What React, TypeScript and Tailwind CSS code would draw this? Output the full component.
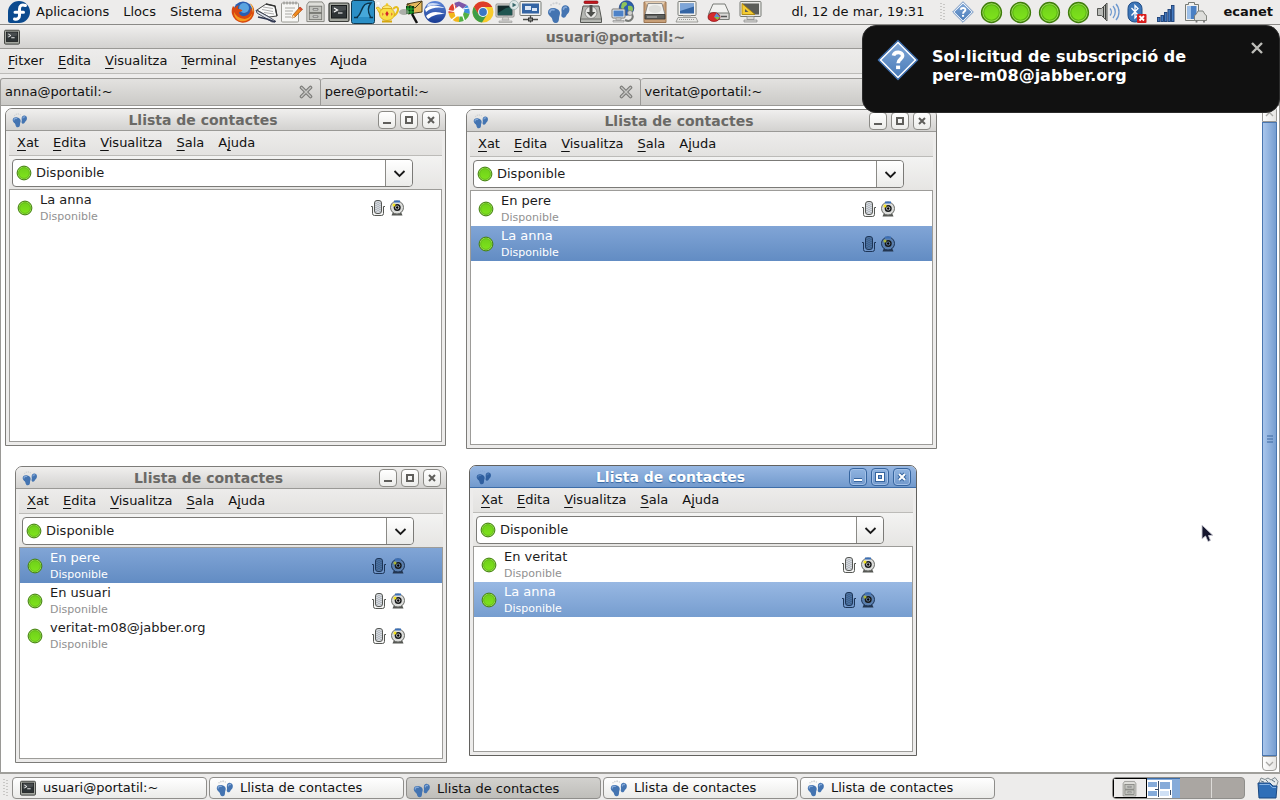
import type { ReactNode } from "react";
import clsx from "clsx";

type Contact = {
  name: string;
  selected?: boolean;
};

type ContactWindow = {
  id: string;
  place: string;
  active?: boolean;
  contacts: Contact[];
};

const windows: ContactWindow[] = [
  {
    id: "veritat",
    place: "left-[4px] top-[2px] w-[441px] h-[338px]",
    contacts: [{ name: "La anna" }],
  },
  {
    id: "anna",
    place: "left-[465px] top-[3px] w-[471px] h-[340px]",
    contacts: [{ name: "En pere" }, { name: "La anna", selected: true }],
  },
  {
    id: "usuari",
    place: "left-[14px] top-[360px] w-[432px] h-[297px]",
    contacts: [
      { name: "En pere", selected: true },
      { name: "En usuari" },
      { name: "veritat-m08@jabber.org" },
    ],
  },
  {
    id: "pere",
    place: "left-[468px] top-[359px] w-[448px] h-[291px]",
    active: true,
    contacts: [{ name: "En veritat" }, { name: "La anna", selected: true }],
  },
];

const terminalTabs = ["anna@portatil:~", "pere@portatil:~", "veritat@portatil:~", "usuari@portatil:~"];

// "_" goes before the letter that is underlined
const terminalMenu = ["_Fitxer", "_Edita", "_Visualitza", "_Terminal", "_Pestanyes", "A_juda"];
const contactMenu = ["_Xat", "_Edita", "_Visualitza", "_Sala", "A_juda"];

/* ---------- icons ---------- */

function Icon({ size = 24, children }: { size?: number; children: ReactNode }) {
  return (
    <svg width={size} height={size} viewBox="0 0 24 24" className="shrink-0" aria-hidden="true">
      {children}
    </svg>
  );
}

function Dot({ size = 16 }: { size?: number }) {
  return (
    <svg width={size} height={size} viewBox="0 0 16 16" className="shrink-0" aria-hidden="true">
      <circle cx="8" cy="8" r="6.9" fill="#a3e060" stroke="#3f7d0b" strokeWidth="1" />
      <circle cx="8" cy="8" r="5.4" fill="url(#dotFill)" stroke="#5cb512" strokeWidth="0.8" />
    </svg>
  );
}

function FedoraIcon() {
  return (
    <Icon>
      <path d="M12 1a11 11 0 1 1 0 22H3.500A2.500 2.500 0 0 1 1 20.500V12A11 11 0 0 1 12 1z" fill="#0b4a8e" />
      <path
        d="M18.500 5.500c-4-1.500-6 .3-6 3.500v6.500c0 2.800-2 4.200-5 3.500M8 12.300h8.500"
        fill="none"
        stroke="#fff"
        strokeWidth="3"
        strokeLinecap="round"
      />
    </Icon>
  );
}

function FirefoxIcon() {
  return (
    <Icon>
      <circle cx="12" cy="11" r="9.500" fill="#2a5db0" />
      <circle cx="13" cy="8" r="5" fill="#5aa4e0" />
      <path d="M2 6l2 2c1-2 2.500-2.500 4-2.500-1 1-1.500 2-1 3.200 2 .2 3 .6 4.500 1.500-1.200 1.500-2.500 1.600-3.500 2.200.5 2.800 3 4.200 6 3.600 4-.8 6-4 5.500-8.500 1.500 1.300 1.800 3 1.700 4.500.9-3.700-.4-7.200-3-9 4.800 2.200 6 7.500 4.300 12.500A11.300 11.300 0 0 1 1 14c-.8-3 0-6 1-8z" fill="#d9480f" />
      <path d="M3 12c0 6 4 9.500 9.500 9.300 4.500-.3 8-3.300 8.800-8-2 4.500-5.500 6-9 5.500C8 18.200 5 16 3 12z" fill="#f59b1c" />
      <path d="M19 3c3 2.500 4 6.500 3 10.500-.2-4-1-7-3-10.500z" fill="#fbc531" />
    </Icon>
  );
}

function PapersIcon() {
  return (
    <Icon>
      <path d="M2 10l9-6 9 2 2 10-8 1z" fill="#fafafa" stroke="#444" />
      <path d="M11 4l9 2 2 10" fill="none" stroke="#333" strokeWidth="1.300" />
      <path d="M8 7l10 1.500M7 9.500l11 2M9 12.500l10 1.500" stroke="#999" strokeWidth="0.800" />
      <path d="M1 10l13 7 7 4.500-4 .5L2 13z" fill="#dfe3ec" stroke="#3c4254" strokeWidth="0.900" />
      <path d="M3 17l9 2 8 3" fill="none" stroke="#2d3550" strokeWidth="1.500" />
    </Icon>
  );
}

function NotepadIcon() {
  return (
    <Icon>
      <rect x="2.500" y="3" width="17" height="19" rx="1" fill="#f7f7f5" stroke="#9a9a94" />
      <path d="M5 1.500v3M8 1.500v3M11 1.500v3M14 1.500v3M17 1.500v3" stroke="#8a8a86" />
      <path d="M6 8h10M6 11h8M6 14h7M6 17h6" stroke="#a9a9a4" />
      <path d="M21 7l2.500 2.200L16 17l-3 1 1-3z" fill="#f08a1d" stroke="#a9520c" strokeWidth="0.800" />
      <path d="M14 15l2 2-3 1z" fill="#f6e3c0" />
      <path d="M21 7l2.500 2.200-1.500 1.500L19.700 8.500z" fill="#d8463a" />
    </Icon>
  );
}

function CabinetIcon({ size = 24 }: { size?: number }) {
  return (
    <Icon size={size}>
      <path d="M5 2h14l2 3v17.500H3V5z" fill="#dededa" stroke="#83837e" />
      <rect x="5.500" y="6.500" width="13" height="6.500" fill="#c2c3be" stroke="#757671" />
      <rect x="5.500" y="14" width="13" height="6.500" fill="#c2c3be" stroke="#757671" />
      <path d="M9.500 9h5v1.500h-5zM9.500 16.500h5V18h-5z" fill="#fff" stroke="#555" strokeWidth="0.700" />
    </Icon>
  );
}

function TerminalIcon({ size = 24 }: { size?: number }) {
  return (
    <Icon size={size}>
      <rect x="2" y="3" width="20" height="18.500" rx="1.500" fill="#a3a69f" stroke="#3a3c39" strokeWidth="1.200" />
      <rect x="4.500" y="5.500" width="15" height="12.500" fill="#2e3436" stroke="#171a1b" />
      <path d="M7 8l3.500 2L7 12M11 13h4.500" fill="none" stroke="#fff" strokeWidth="1.200" />
      <path d="M5 6h14v4L5 13z" fill="#fff" opacity="0.120" />
    </Icon>
  );
}

function SharkFinIcon() {
  return (
    <Icon>
      <rect x="0.500" y="0.500" width="23" height="23" rx="2" fill="#2b8fc6" stroke="#0e3850" />
      <path d="M6 17c4-2 4-9 8-12.500C15.500 3.500 17.500 3 20 3c-3.500 4-3 9.500-.5 14" fill="#46a8da" stroke="#0c3349" strokeWidth="1.400" />
      <path d="M3 17.500h4M18.500 17.500H22" stroke="#0c3349" strokeWidth="1.400" />
    </Icon>
  );
}

function TeapotIcon() {
  return (
    <Icon>
      <path d="M1 3c2-3 5-1 4 1s2 1 2 3" fill="#fff" stroke="#ddd" strokeWidth="0.800" />
      <path d="M18 9c4-4 6-1 4.500 2.500S19 16 17.500 16" fill="none" stroke="#e6bd1c" strokeWidth="2" />
      <path d="M6 14C3 13 3 9 1 8l2-1c2 1 3 3 4 3" fill="#f7dc4a" stroke="#d5a60f" strokeWidth="0.800" />
      <ellipse cx="12" cy="14" rx="7.500" ry="6.500" fill="#f9de45" stroke="#d5a60f" strokeWidth="0.800" />
      <path d="M7 8.500c1-4 9-4 10 0z" fill="#fbe873" stroke="#d5a60f" strokeWidth="0.800" />
      <circle cx="12" cy="4.500" r="1.300" fill="#f2ca28" />
      <path d="M7 21.500h10" stroke="#d5a60f" strokeWidth="2" />
      <path d="M12 11l1.700 2.700L12 16.500l-1.700-2.800zM7.500 12.500l1 1.500-1 2zM16.500 12.500l1 1.500-1 2z" fill="#d3222a" />
    </Icon>
  );
}

function PacketSearchIcon() {
  return (
    <Icon>
      <path d="M8 4l15-3v11L9 14z" fill="#e5b95b" stroke="#4a3a17" />
      <path d="M8 4l8 4 7-7" fill="none" stroke="#4a3a17" />
      <rect x="7" y="6" width="8" height="8" fill="#0d3d12" />
      <path d="M9 6v8M12 6v8M7 9h8M7 12h8" stroke="#25b533" />
      <ellipse cx="5" cy="12" rx="5" ry="3" fill="#8f948b" opacity="0.700" />
      <path d="M13 14l5 9" stroke="#111" strokeWidth="2.500" />
    </Icon>
  );
}

function EarthIcon() {
  return (
    <Icon>
      <circle cx="12" cy="12" r="11" fill="url(#earthFill)" />
      <path d="M2 9c5-5 12-4 20-1-7-1-13-1-19 4zM3 16c5-5 11-5 19-2-7 0-12 1-17 5z" fill="#fff" />
      <path d="M5 4c4-2 9-1 13 1-5-.5-9 0-14 2z" fill="#cddcf6" />
    </Icon>
  );
}

function PicasaIcon() {
  return (
    <Icon>
      <path d="M12 1.500L20 5l-8 7L7 3z" fill="#7e57a8" />
      <path d="M20 5a11 11 0 0 1 2.500 9L13 12z" fill="#3f8ede" />
      <path d="M22.500 14A10.500 10.500 0 0 1 12 22l1-11z" fill="#52b043" />
      <path d="M12 22A10.500 10.500 0 0 1 1.500 13L12 11z" fill="#f2b61c" />
      <path d="M1.500 13A10.500 10.500 0 0 1 7 3l5 9z" fill="#e0402f" />
      <path d="M12 6l5.500 4-2 6.500h-7L6.500 10z" fill="#fff" />
      <path d="M8 9L6.500 2.500M16 9l6-1M15.500 15l2 6M9.500 16L4 20.500M7 11.500l-6-1" stroke="#fff" strokeWidth="1.200" />
    </Icon>
  );
}

function ChromeIcon() {
  return (
    <Icon>
      <circle cx="12" cy="12" r="10.500" fill="#f7cb2d" />
      <path d="M2.900 6.700A10.500 10.500 0 0 1 21.300 7H12l-4.300 7.500z" fill="#dd3b2a" />
      <path d="M2.900 6.700A10.500 10.500 0 0 0 11 22.400l5-8-8.300.1z" fill="#3f9d46" />
      <circle cx="12" cy="12" r="5" fill="#f5f5f5" />
      <circle cx="12" cy="12" r="3.900" fill="#3a77c4" />
    </Icon>
  );
}

function ScreencastIcon() {
  return (
    <Icon>
      <rect x="1" y="4" width="18" height="13" rx="1" fill="#e8e8e6" stroke="#8c8c88" />
      <rect x="2.500" y="5.500" width="15" height="10" fill="#12292b" />
      <path d="M3 13l8-5 6-1v8H3z" fill="#1f5550" />
      <path d="M8 17h5l1 3H7zM4 21h13v1.500H4z" fill="#d0d0cc" stroke="#999" strokeWidth="0.600" />
      <circle cx="19" cy="5" r="4.500" fill="#dfe8e8" stroke="#9bb0b0" strokeWidth="0.800" />
      <path d="M17.500 2.700v4.600L21.500 5z" fill="#3b6a6d" />
    </Icon>
  );
}

function RemoteDesktopIcon() {
  return (
    <Icon>
      <rect x="1" y="1.500" width="21" height="14" rx="1" fill="#f2f2f0" stroke="#777a75" />
      <rect x="3" y="3.500" width="17" height="10" fill="#3465a4" />
      <path d="M6 6h6v4H6zM13 8h5v3h-5z" fill="#dce7f5" />
      <path d="M11.500 15.500v7M4 19.500h15" stroke="#4b4d4a" strokeWidth="1.300" />
      <rect x="9.500" y="18" width="4" height="3" fill="#8a8c88" stroke="#333" />
    </Icon>
  );
}

function FeetIcon({ size = 24, dark }: { size?: number; dark?: boolean }) {
  return (
    <Icon size={size}>
      <g fill={dark ? "#86a9d8" : "#cfd1d3"}>
        <circle cx="4" cy="5" r="1" />
        <circle cx="6.500" cy="3.500" r="1.100" />
        <circle cx="9.500" cy="3" r="1.200" />
        <circle cx="12.500" cy="4" r="1" />
      </g>
      <g fill={dark ? "#2f5f9f" : "#4474b1"}>
        <path d="M1 12.500C1 9 3.500 7.500 7 8s6 2.500 6 5c0 2.200-1 3-1 5.500s-1 4.500-3.200 4.500c-2.500 0-3.300-2-3.600-4S1 15.500 1 12.500z" />
        <path d="M14.500 9c.3-3 2.200-4.200 4.500-3.800 2.800.5 4 2.800 3.300 5.800-.7 2.700-2 2.500-3 4.500s-2 2.500-3.400 2c-1.500-.5-1.900-2-1.400-3.500s-.2-2.500 0-5z" />
      </g>
      <path
        d="M3 12c.2-2 2-2.700 4-2.200M16.500 9c.3-1.500 1.500-2 2.700-1.700"
        fill="none"
        stroke={dark ? "#4d7ab5" : "#83a8d8"}
        strokeWidth="1.800"
        strokeLinecap="round"
      />
    </Icon>
  );
}

function InstallIcon() {
  return (
    <Icon>
      <path d="M4 6h16l2.500 13v3.500h-21V19z" fill="#b5b7b2" stroke="#555753" />
      <path d="M2 19h20" stroke="#6d6f6b" />
      <circle cx="12" cy="12.500" r="6" fill="#e7e8e5" stroke="#777" strokeWidth="0.800" />
      <path d="M10.500 5h3v7h3L12 17l-4.500-5h3z" fill="#4d4f4c" />
      <rect x="5" y="1" width="14" height="2.500" rx="1" fill="#c5161d" stroke="#7f0a10" strokeWidth="0.700" />
    </Icon>
  );
}

function NetworkGlobeIcon() {
  return (
    <Icon>
      <circle cx="15.500" cy="8" r="7.300" fill="#2c5fae" stroke="#173b77" strokeWidth="0.700" />
      <path d="M11 3c3-2 5-1 5 1s-3 2-3 4-3 1-3-1zM17 6c3-1 5 0 5 3s-3 5-4 4 0-3-1-4z" fill="#8fc45a" />
      <rect x="1" y="9" width="13" height="9" rx="1" fill="#f2f2f0" stroke="#777" />
      <rect x="2.500" y="10.500" width="10" height="6" fill="#4d82c8" />
      <path d="M5 18h5v2H5zM2 20.500h11V22H2z" fill="#dadad7" stroke="#888" strokeWidth="0.600" />
      <path d="M14 20c6 3 10-3 6-7" fill="none" stroke="#777a76" strokeWidth="2" />
      <circle cx="19" cy="13" r="2.500" fill="#d0d0cc" stroke="#777" strokeWidth="0.700" />
    </Icon>
  );
}

function DiskBoxIcon() {
  return (
    <Icon>
      <path d="M1 2h22v20.500H1z" fill="#c89f77" stroke="#9b7450" />
      <path d="M2 2h20l-2 3H4z" fill="#e7cfb2" />
      <path d="M5 3.500h14l3 11H2z" fill="#f0f0ee" stroke="#777" strokeWidth="0.800" />
      <ellipse cx="12" cy="9" rx="6.500" ry="4" fill="#dededb" />
      <path d="M2 14.500h20v4.500H2z" fill="#5f615e" stroke="#333" strokeWidth="0.800" />
      <path d="M4 17h10" stroke="#bbb" />
    </Icon>
  );
}

function ComputerIcon() {
  return (
    <Icon>
      <rect x="3" y="1.500" width="18" height="14" rx="1" fill="#f2f2f0" stroke="#777a75" />
      <rect x="5" y="3.500" width="14" height="10" fill="#3465a4" />
      <path d="M5 3.500h14v3L5 11z" fill="#7da5d8" />
      <path d="M8 15.500h8v2H8z" fill="#c8c8c4" />
      <path d="M3 17.500h18l2 4.500H1z" fill="#e9e9e6" stroke="#8a8c87" strokeWidth="0.800" />
      <path d="M4 19.500h16" stroke="#999" strokeDasharray="1 1" />
    </Icon>
  );
}

function DiskUsageIcon() {
  return (
    <Icon>
      <path d="M6 4h12l4 9v6.500H2V13z" fill="#f2f2f0" stroke="#777a75" />
      <path d="M2 13h20v6.500H2z" fill="#d9d9d6" stroke="#777a75" />
      <path d="M14 16.500h6" stroke="#555" strokeWidth="1.500" />
      <ellipse cx="7" cy="17" rx="6" ry="4.500" fill="#d52b2b" stroke="#8c0f12" strokeWidth="0.700" />
      <path d="M7 17l2.500-4 3.500 4z" fill="#5e8ed0" />
      <path d="M7 17h6l-2.500 3z" fill="#7fc04a" />
    </Icon>
  );
}

function RulerScreenIcon() {
  return (
    <Icon>
      <rect x="1" y="1.500" width="21" height="15" rx="1" fill="#e8e8e5" stroke="#777a75" />
      <rect x="3" y="3.500" width="17" height="11" fill="#5b5d59" />
      <path d="M3 3.500l13 11H3z" fill="#f3cb33" stroke="#a98207" strokeWidth="0.800" />
      <path d="M6 9l3.500 3H6z" fill="#5b5d59" />
      <path d="M8 16.500h7v3H8zM5 20h13v2H5z" fill="#d9d9d6" stroke="#888" strokeWidth="0.700" />
    </Icon>
  );
}

function QuestionIcon({ size }: { size: number }) {
  return (
    <Icon size={size}>
      <path d="M12 .8L23.200 12 12 23.200.8 12z" fill="#fff" stroke="#3a6bab" strokeWidth="0.800" strokeLinejoin="round" />
      <path d="M12 2.600L21.400 12 12 21.400 2.600 12z" fill="url(#questionFill)" />
      <path d="M9.400 9.500c.6-2.600 5.400-2.400 5.200.2-.1 1.900-2.500 1.800-2.500 4.100" fill="none" stroke="#fff" strokeWidth="2.100" />
      <rect x="10.900" y="15.200" width="2.300" height="2" fill="#fff" />
    </Icon>
  );
}

function VolumeIcon() {
  return (
    <Icon>
      <path d="M1.500 8.500h4L11 3v18l-5.500-5.500h-4z" fill="#b9bbb7" stroke="#555753" />
      <path d="M7.500 7v10M9.500 5v14" stroke="#3f413e" />
      <path d="M14 8.500c1.800 2 1.800 5 0 7M17 6c3 3.500 3 8.500 0 12M20 4c4 4.500 4 11.500 0 16" fill="none" stroke="#6c98cf" strokeWidth="1.300" />
    </Icon>
  );
}

function BluetoothIcon() {
  return (
    <Icon>
      <rect x="3" y="2" width="14" height="20" rx="6.500" fill="#3d76b8" stroke="#1f4c86" />
      <path d="M6.500 8l6.500 7-3 3V5.500l3 3-6.500 7" fill="none" stroke="#fff" strokeWidth="1.300" />
      <rect x="12" y="14" width="9.500" height="9" rx="1" fill="#d81e1e" />
      <path d="M14.500 16l4.500 4.500M19 16l-4.500 4.500" stroke="#fff" strokeWidth="1.800" />
    </Icon>
  );
}

function SignalIcon() {
  return (
    <Icon>
      <g fill="#4479be" stroke="#1c3f77" strokeWidth="0.900">
        <rect x="3.500" y="17.500" width="2.500" height="4" />
        <rect x="7" y="15.500" width="2.500" height="6" />
        <rect x="10.500" y="12.500" width="2.500" height="9" />
        <rect x="14" y="9.500" width="2.500" height="12" />
        <rect x="17.500" y="5.500" width="2.500" height="16" />
      </g>
    </Icon>
  );
}

function BatteryIcon() {
  return (
    <Icon>
      <path d="M5.500 2.500h6v2h4v16h-13v-16h3z" fill="#f0f0ee" stroke="#777a75" />
      <rect x="4.500" y="6" width="9" height="13" fill="#4a80c4" />
      <path d="M4.500 6H8v13H4.500z" fill="#9cc0ea" />
      <path d="M13 14.500l2-3.500h5l2 3.500 1.500 1v5H11.500V15.500z" fill="#dededb" stroke="#777a75" strokeWidth="0.900" />
      <path d="M13.500 20.500v2M21 20.500v2" stroke="#777" strokeWidth="1.800" />
    </Icon>
  );
}

function TrashIcon() {
  return (
    <Icon>
      <path d="M3 7l2-5 4 1.500L12 2l3 2 4-2.500 3 4L20 12z" fill="#e3e8ea" stroke="#7f8a90" />
      <path d="M5 5l3 1M10 4l2 2M16 4l3 2" stroke="#5d7486" />
      <path d="M2 7h12l3 3h4l-1 12H3z" fill="#2f6fb8" stroke="#1b4880" />
      <path d="M3.500 8.500h10l3 3H20" fill="none" stroke="#86b3e4" />
    </Icon>
  );
}

function MicIcon({ selected }: { selected?: boolean }) {
  const line = selected ? "#1d3557" : "#555753";
  return (
    <svg width="16" height="16" viewBox="0 0 16 16" className="shrink-0" aria-hidden="true">
      <path
        d="M1 6.500h1.500v7a2 2 0 0 0 2 2h7a2 2 0 0 0 2-2v-7H15"
        fill={selected ? "#6f95c8" : "#f3f3f3"}
        stroke={line}
      />
      <rect x="4.500" y="0.500" width="7" height="13" rx="2.500" fill={selected ? "#4c719f" : "#d3d7dc"} stroke={line} />
      <path
        d="M6 3v9M8 2v10M10 3v9"
        stroke={selected ? "#30527f" : "#9097a0"}
        strokeWidth="0.900"
        strokeDasharray="1 1"
      />
    </svg>
  );
}

function WebcamIcon({ selected }: { selected?: boolean }) {
  return (
    <svg width="16" height="16" viewBox="0 0 16 16" className="shrink-0" aria-hidden="true">
      <path d="M4 12h8l1.500 3.500h-11z" fill={selected ? "#24364f" : "#555753"} />
      <circle cx="8" cy="7.500" r="6.500" fill={selected ? "#5a7fae" : "#dcdddb"} stroke={selected ? "#1d3557" : "#6c6e6a"} />
      <path d="M5 1.500h6" stroke="#3b6fb5" strokeWidth="2" />
      <circle cx="8.200" cy="7.500" r="3.500" fill="#17191a" />
      <circle cx="8.200" cy="7.500" r="2" fill={selected ? "#6f90bb" : "#d8d8d8"} />
      <circle cx="8.200" cy="7.500" r="1.200" fill="#000" />
      <circle cx="5" cy="5" r="1.500" fill={selected ? "#a9b53a" : "#f2e21c"} />
    </svg>
  );
}

function CloseGlyph() {
  return (
    <svg width="14" height="14" viewBox="0 0 14 14" className="block" aria-hidden="true">
      <path d="M2.500 2.500l9 9M11.500 2.500l-9 9" stroke="#7c7c79" strokeWidth="3.600" strokeLinecap="round" />
      <path d="M2.500 2.500l9 9M11.500 2.500l-9 9" stroke="#c6c6c3" strokeWidth="1.400" strokeLinecap="round" />
    </svg>
  );
}

// gradients shared by all the icons
function Gradients() {
  return (
    <svg width="0" height="0" className="absolute" aria-hidden="true">
      <defs>
        <linearGradient id="dotFill" x1="0" y1="0" x2="0" y2="1">
          <stop offset="0" stopColor="#6fd01a" />
          <stop offset="1" stopColor="#7fe31c" />
        </linearGradient>
        <linearGradient id="questionFill" x1="0" y1="0" x2="0" y2="1">
          <stop offset="0" stopColor="#7fa6d6" />
          <stop offset="1" stopColor="#4a7cb9" />
        </linearGradient>
        <linearGradient id="earthFill" x1="0" y1="0" x2="0" y2="1">
          <stop offset="0" stopColor="#5d86d8" />
          <stop offset="1" stopColor="#173a92" />
        </linearGradient>
      </defs>
    </svg>
  );
}

/* ---------- shared pieces ---------- */

function Menu({ items }: { items: string[] }) {
  return (
    <nav className="flex h-full items-center gap-3.5">
      {items.map((item) => {
        const [before, after] = item.split("_");
        return (
          <button key={item} type="button" className="whitespace-nowrap">
            {before}
            <span className="underline underline-offset-[3px]">{after[0]}</span>
            {after.slice(1)}
          </button>
        );
      })}
    </nav>
  );
}

function WindowButton({ kind, active }: { kind: "min" | "max" | "close"; active?: boolean }) {
  const labels = { min: "Minimitza", max: "Maximitza", close: "Tanca" };
  const paths = { min: "M5 12h8", max: "M6 6h6v6H6z", close: "M6 6l6 6M12 6l-6 6" };
  return (
    <button
      type="button"
      aria-label={labels[kind]}
      className={clsx(
        "size-[18px] rounded-[4px] border",
        active
          ? "border-[#36659f] bg-linear-to-b from-[#8fb3e0] to-[#7299cc] shadow-[inset_0_0_0_1px_#a3c0e6]"
          : "border-[#8b8a86] bg-linear-to-b from-white to-[#ececea]",
      )}
    >
      <svg width="18" height="18" viewBox="0 0 18 18" className="-m-px" aria-hidden="true">
        {active && <path d={paths[kind]} fill="none" stroke="#36659f" strokeWidth="4" />}
        <path d={paths[kind]} fill="none" stroke={active ? "#fff" : "#5f5e5b"} strokeWidth="2" />
      </svg>
    </button>
  );
}

function ContactRow({ contact, active }: { contact: Contact; active?: boolean }) {
  return (
    <li
      className={clsx(
        "flex h-[35px] items-center pr-9 pl-[7px]",
        contact.selected && (active ? "bg-linear-to-b from-[#98b8e3] to-[#769dcf]" : "bg-linear-to-b from-[#81a5d6] to-[#628cc3]"),
      )}
    >
      <Dot />
      <div className="ml-[7px] flex-1">
        <p className={clsx("leading-[19px]", contact.selected ? "text-white" : "text-[#1c1c1c]")}>{contact.name}</p>
        <p className={clsx("text-[11px] leading-4", contact.selected ? "text-white" : "text-[#919191]")}>
          Disponible
        </p>
      </div>
      <div className="flex gap-[3px]">
        <MicIcon selected={contact.selected} />
        <WebcamIcon selected={contact.selected} />
      </div>
    </li>
  );
}

function ContactListWindow({ win }: { win: ContactWindow }) {
  const { active } = win;
  return (
    <section
      className={clsx(
        "absolute flex flex-col overflow-hidden rounded-t-[7px] border bg-[#edeceb]",
        active ? "border-[#62615e]" : "border-[#7d7c79]",
        win.place,
      )}
    >
      <header
        className={clsx(
          "flex h-[22px] shrink-0 items-center border-b pr-[5px] pl-1.5",
          active
            ? "border-[#3d6da8] bg-linear-to-b from-[#98b8e3] to-[#729acd]"
            : "border-[#9a9996] bg-linear-to-b from-[#f0efee] to-[#d3d2d0]",
        )}
      >
        <FeetIcon size={16} dark={active} />
        <h2
          className={clsx(
            "flex-1 text-center text-[14px] leading-5 font-bold",
            active ? "text-white [text-shadow:0_1px_1px_#36659f]" : "text-[#6a6966]",
          )}
        >
          Llista de contactes
        </h2>
        <div className="flex gap-1">
          <WindowButton kind="min" active={active} />
          <WindowButton kind="max" active={active} />
          <WindowButton kind="close" active={active} />
        </div>
      </header>
      <div className="flex flex-1 flex-col px-[3px] pb-[3px]">
        <div className="h-[25px] border-b border-[#bcbbb8] bg-linear-to-b from-[#edeceb] to-[#e3e2e0] pl-2">
          <Menu items={contactMenu} />
        </div>
        <div className="h-[33px] bg-linear-to-b from-[#f3f3f2] to-[#e6e5e3] pt-[3px] pr-[29px] pl-[3px]">
          <label className="flex h-[28px] items-center rounded-[4px] border border-[#7b7a77] bg-white pl-[3px]">
            <Dot />
            <select aria-label="Estat" className="h-full flex-1 appearance-none bg-transparent pl-1 text-[#1c1c1c] outline-none">
              <option>Disponible</option>
              <option>Ocupat</option>
              <option>Absent</option>
            </select>
            <span className="flex h-full w-[27px] items-center justify-center rounded-r-[4px] border-l border-[#8b8a86] bg-linear-to-b from-white to-[#ebebe9]">
              <svg width="13" height="9" viewBox="0 0 13 9" aria-hidden="true">
                <path d="M1.500 2l5 5 5-5" fill="none" stroke="#1a1a1a" strokeWidth="1.800" />
              </svg>
            </span>
          </label>
        </div>
        <ul className="flex-1 border border-[#9d9c99] bg-white">
          {win.contacts.map((contact) => (
            <ContactRow key={contact.name} contact={contact} active={active} />
          ))}
        </ul>
      </div>
    </section>
  );
}

/* ---------- panels ---------- */

const launchers = [
  { label: "Firefox", icon: <FirefoxIcon /> },
  { label: "Documents", icon: <PapersIcon /> },
  { label: "Editor de text", icon: <NotepadIcon /> },
  { label: "Fitxers", icon: <CabinetIcon size={23} /> },
  { label: "Terminal", icon: <TerminalIcon /> },
  { label: "Wireshark", icon: <SharkFinIcon /> },
  { label: "Tetera", icon: <TeapotIcon /> },
  { label: "Paquets", icon: <PacketSearchIcon /> },
  { label: "Google Earth", icon: <EarthIcon /> },
  { label: "Picasa", icon: <PicasaIcon /> },
  { label: "Chrome", icon: <ChromeIcon /> },
  { label: "Gravador", icon: <ScreencastIcon /> },
  { label: "Escriptori remot", icon: <RemoteDesktopIcon /> },
];

const wideLaunchers = [
  { label: "Empathy", icon: <FeetIcon /> },
  { label: "Instal·lador", icon: <InstallIcon /> },
  { label: "Xarxa", icon: <NetworkGlobeIcon /> },
  { label: "Disc", icon: <DiskBoxIcon /> },
  { label: "Ordinador", icon: <ComputerIcon /> },
  { label: "Ús del disc", icon: <DiskUsageIcon /> },
  { label: "Pantalla", icon: <RulerScreenIcon /> },
];

const tray = [
  { label: "Sol·licitud", icon: <QuestionIcon size={22} /> },
  { label: "Estat 1", icon: <Dot size={23} /> },
  { label: "Estat 2", icon: <Dot size={23} /> },
  { label: "Estat 3", icon: <Dot size={23} /> },
  { label: "Estat 4", icon: <Dot size={23} /> },
  { label: "Volum", icon: <VolumeIcon /> },
  { label: "Bluetooth", icon: <BluetoothIcon /> },
  { label: "Senyal", icon: <SignalIcon /> },
  { label: "Bateria", icon: <BatteryIcon /> },
];

function Grip() {
  return (
    <svg width="6" height="18" viewBox="0 0 6 18" className="shrink-0" aria-hidden="true">
      <path d="M1 0v18M4 1v17" stroke="#a3a29f" strokeWidth="1" strokeDasharray="1 2" />
    </svg>
  );
}

function TopPanel() {
  return (
    <header className="flex h-[25px] shrink-0 items-center border-b border-[#8b8a87] bg-[#edeceb]">
      <div className="flex items-center gap-3.5 pl-[7px]">
        <button type="button" className="flex items-center gap-[5px]">
          <FedoraIcon />
          Aplicacions
        </button>
        <button type="button">Llocs</button>
        <button type="button">Sistema</button>
      </div>
      <div className="ml-[9px] flex">
        {launchers.map(({ label, icon }) => (
          <button key={label} type="button" aria-label={label} className="flex w-6 justify-center">
            {icon}
          </button>
        ))}
        {wideLaunchers.map(({ label, icon }) => (
          <button key={label} type="button" aria-label={label} className="flex w-8 justify-center">
            {icon}
          </button>
        ))}
      </div>
      <div className="ml-auto flex items-center pr-[7px] whitespace-nowrap">
        <span className="mr-4">dl, 12 de mar, 19:31</span>
        <Grip />
        <div className="ml-0.5 flex">
          {tray.map(({ label, icon }) => (
            <button key={label} type="button" aria-label={label} className="flex w-[29px] items-center justify-center">
              {icon}
            </button>
          ))}
        </div>
        <button type="button" className="ml-3.5 font-bold">
          ecanet
        </button>
      </div>
    </header>
  );
}

function Notification() {
  return (
    <aside className="absolute top-[25px] right-0 flex h-[88px] w-[418px] rounded-[14px] border border-[#2b2b2b] bg-[#111] pt-[13px] pl-3.5 text-white">
      <QuestionIcon size={42} />
      <p className="ml-[13px] flex-1 pt-2 text-[16px] leading-[19px] font-bold">
        Sol·licitud de subscripció de
        <br />
        pere-m08@jabber.org
      </p>
      <button type="button" aria-label="Tanca" className="mr-[15px] size-3.5">
        <svg width="14" height="14" viewBox="0 0 14 14" className="mt-0.5" aria-hidden="true">
          <path d="M2 2l10 10M12 2L2 12" stroke="#bdbdb9" strokeWidth="2.400" />
        </svg>
      </button>
    </aside>
  );
}

function ScrollBar() {
  return (
    <div className="flex w-[15px] shrink-0 flex-col">
      <div className="flex h-4 items-end justify-center rounded-t-[4px] border border-[#9a9996] bg-linear-to-r from-white to-[#e6e5e3] pb-1">
        <svg width="9" height="6" viewBox="0 0 9 6" aria-hidden="true">
          <path d="M1 5l3.500-3.500L8 5" fill="none" stroke="#a9a8a5" strokeWidth="1.300" />
        </svg>
      </div>
      <div className="flex flex-1 items-center justify-center border border-[#4a76af] bg-linear-to-r from-[#a9c6ec] to-[#769dd0]">
        <svg width="6" height="8" viewBox="0 0 6 8" aria-hidden="true">
          <path d="M0 1h6M0 4h6M0 7h6" stroke="#3b67a0" strokeWidth="1" />
        </svg>
      </div>
      <div className="flex h-[15px] items-center justify-center rounded-b-[4px] border border-[#9a9996] bg-linear-to-r from-white to-[#e6e5e3]">
        <svg width="9" height="6" viewBox="0 0 9 6" aria-hidden="true">
          <path d="M1 1l3.500 3.500L8 1" fill="none" stroke="#a9a8a5" strokeWidth="1.300" />
        </svg>
      </div>
    </div>
  );
}

function Pointer() {
  return (
    <svg width="14" height="20" viewBox="0 0 14 20" className="absolute top-[418px] left-[1200px]" aria-hidden="true">
      <path d="M1 1v14l3.500-3 2.500 5.500 2.500-1L7.500 11.500H12z" fill="#15162e" stroke="#c9c9d2" strokeWidth="0.900" />
    </svg>
  );
}

function TerminalWindow() {
  return (
    <main className="flex min-h-0 flex-1 flex-col bg-[#edeceb]">
      <div className="flex h-6 shrink-0 items-center border-b border-[#9a9996] bg-linear-to-b from-[#f0efee] to-[#d3d2d0] pr-[70px] pl-[3px]">
        <TerminalIcon size={18} />
        <h1 className="flex-1 text-center text-[14px] leading-5 font-bold text-[#6a6966]">usuari@portatil:~</h1>
      </div>
      <div className="h-[25px] shrink-0 border-b border-[#bcbbb8] bg-linear-to-b from-[#edeceb] to-[#e6e5e3] pl-2">
        <Menu items={terminalMenu} />
      </div>
      <div className="flex shrink-0 border-b border-[#9a9996] pt-1">
        {terminalTabs.map((tab) => (
          <div
            key={tab}
            className="flex h-[27px] flex-1 items-center rounded-t-[3px] border-t border-r border-[#9a9996] bg-linear-to-b from-[#e3e2e0] to-[#cbcac7] pr-[7px] pl-1 first:border-l"
          >
            <button type="button" className="flex-1 text-left">
              {tab}
            </button>
            <button type="button" aria-label={`Tanca ${tab}`}>
              <CloseGlyph />
            </button>
          </div>
        ))}
      </div>
      <div className="relative flex flex-1 justify-end border-x border-[#9a9996] bg-white pr-[2px] pb-px">
        {windows.map((win) => (
          <ContactListWindow key={win.id} win={win} />
        ))}
        <ScrollBar />
        <Pointer />
      </div>
    </main>
  );
}

function TaskButton({ icon, label, pressed }: { icon: ReactNode; label: string; pressed?: boolean }) {
  return (
    <button
      type="button"
      aria-pressed={pressed}
      className={clsx(
        "flex h-[22px] max-w-[195px] flex-1 items-center gap-1.5 rounded-[4px] border border-[#8f8e8b] pl-1.5 whitespace-nowrap",
        pressed ? "bg-linear-to-b from-[#d2d1ce] to-[#bfbeba] pt-0.5" : "bg-linear-to-b from-white to-[#ebebe9]",
      )}
    >
      {icon}
      {label}
    </button>
  );
}

function Workspaces() {
  return (
    <div className="ml-auto flex h-[22px] w-[133px] overflow-hidden rounded-[4px] border border-[#8f8e8b] bg-[#aaa6a2]">
      <button type="button" aria-label="Espai 1" className="flex flex-1 items-center justify-center border border-black bg-[#edeceb]">
        <CabinetIcon size={17} />
      </button>
      <button type="button" aria-label="Espai 2" className="flex-1 bg-[#86abd9]">
        <svg width="33" height="20" viewBox="0 0 33 20" className="block" aria-hidden="true">
          <path d="M0 .5h33" stroke="#3d6da8" />
          <path d="M0 2h25v18H0z" fill="#fff" />
          <path d="M1 4h9v5H1zM13 4h10v7H13zM1 13h9v5H1z" fill="#86abd9" />
          <path d="M13 13h9v5h-9z" fill="#cfe0f5" />
          <path d="M8 11.500h3M11.500 3v16M23.500 12v5" stroke="#3a4a63" />
        </svg>
      </button>
      <button type="button" aria-label="Espai 3" className="flex-1 border-r border-[#dddbd8]" />
      <button type="button" aria-label="Espai 4" className="flex-1" />
    </div>
  );
}

function Taskbar() {
  return (
    <footer className="flex h-7 shrink-0 items-center border-t-2 border-[#a09f9b] bg-[#edeceb] pt-[2px]">
      <div className="ml-[3px] w-[9px]">
        <Grip />
      </div>
      <div className="flex flex-1 gap-0.5">
        <TaskButton icon={<TerminalIcon size={18} />} label="usuari@portatil:~" />
        <TaskButton icon={<FeetIcon size={18} />} label="Llista de contactes" />
        <TaskButton icon={<FeetIcon size={18} />} label="Llista de contactes" pressed />
        <TaskButton icon={<FeetIcon size={18} />} label="Llista de contactes" />
        <TaskButton icon={<FeetIcon size={18} />} label="Llista de contactes" />
      </div>
      <Workspaces />
      <button type="button" aria-label="Paperera" className="ml-[11px]">
        <TrashIcon />
      </button>
    </footer>
  );
}

export default function App() {
  return (
    <div className="relative flex h-screen min-h-[800px] flex-col overflow-hidden bg-[#edeceb] font-['DejaVu_Sans',sans-serif] text-[13px] leading-4 text-[#111]">
      <Gradients />
      <TopPanel />
      <TerminalWindow />
      <Taskbar />
      <Notification />
    </div>
  );
}
